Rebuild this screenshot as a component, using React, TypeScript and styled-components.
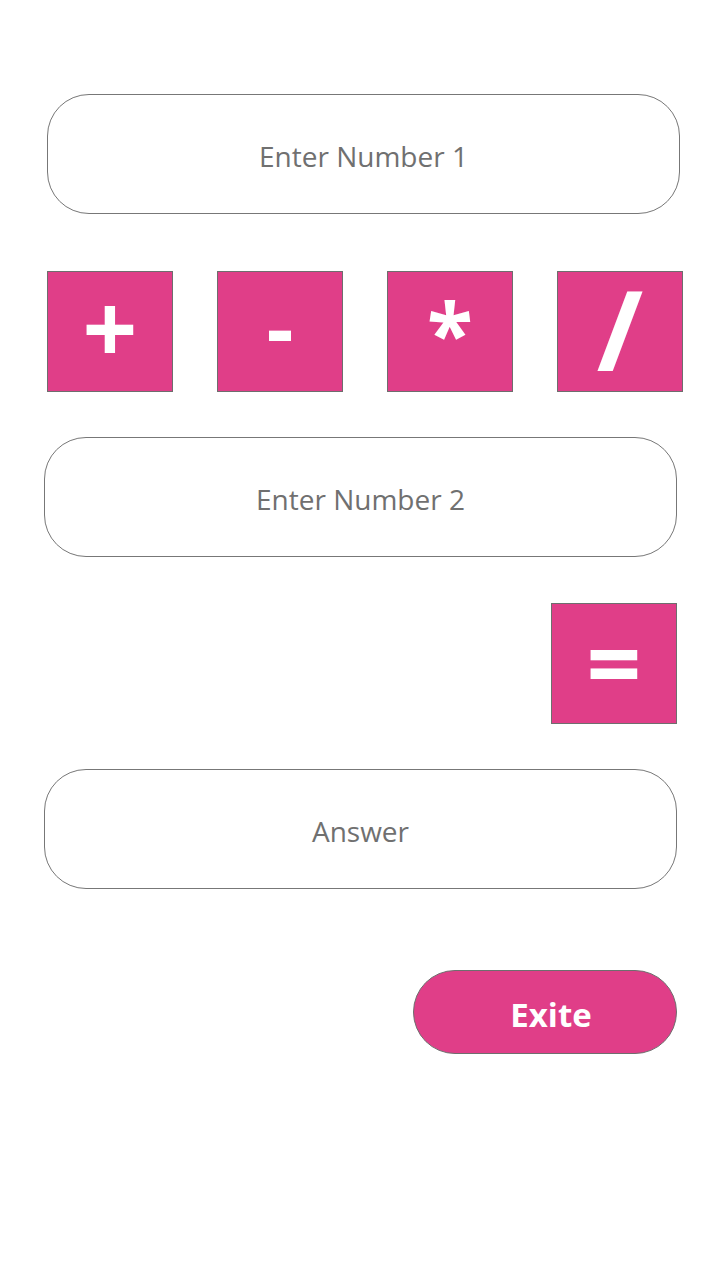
import React from "react";
import styled, { createGlobalStyle } from "styled-components";

const Global = createGlobalStyle`
  html, body { margin: 0; padding: 0; background: #ffffff; }
  body { font-family: "Open Sans", "Noto Sans", sans-serif; }
`;

const PINK = "#e03e88";

const Page = styled.div`
  width: 720px;
  height: 1280px;
  box-sizing: border-box;
  padding-top: 94px;
  display: flex;
  flex-direction: column;
`;

const Field = styled.input<{ $left: number; $gap: number }>`
  box-sizing: border-box;
  width: 633px;
  height: 120px;
  margin-left: ${(p) => p.$left}px;
  margin-bottom: ${(p) => p.$gap}px;
  border: 1px solid #777777;
  border-radius: 42px;
  background: #ffffff;
  text-align: center;
  font-family: "Open Sans", "Noto Sans", sans-serif;
  font-size: 28px;
  color: #707070;
  outline: none;
  padding: 4px 0 0 0;
  &::placeholder { color: #707070; opacity: 1; }
`;

const OpRow = styled.div`
  display: flex;
  gap: 44px;
  margin-left: 47px;
  margin-bottom: 45px;
`;

const OpButton = styled.button`
  box-sizing: border-box;
  width: 126px;
  height: 121px;
  background: ${PINK};
  border: 1px solid #6e6e6e;
  border-radius: 0;
  color: #ffffff;
  padding: 0;
  display: flex;
  align-items: center;
  justify-content: center;
  cursor: pointer;
`;

const Glyph = styled.span<{ $size: number; $lift: number }>`
  display: block;
  font-family: "Open Sans", "Noto Sans", sans-serif;
  font-weight: 700;
  font-size: ${(p) => p.$size}px;
  line-height: 1;
  margin-bottom: ${(p) => p.$lift}px;
`;

const EqualsRow = styled.div`
  display: flex;
  justify-content: flex-end;
  width: 677px;
  margin-bottom: 45px;
`;

const ExitRow = styled.div`
  display: flex;
  justify-content: flex-end;
  width: 677px;
`;

const ExitButton = styled.button`
  box-sizing: border-box;
  width: 264px;
  height: 84px;
  border-radius: 42px;
  background: ${PINK};
  border: 1px solid #6e6e6e;
  color: #ffffff;
  font-family: "Open Sans", "Noto Sans", sans-serif;
  font-weight: 700;
  font-size: 33px;
  padding: 4px 0 0 12px;
  cursor: pointer;
`;

export default function App() {
  return (
    <>
      <Global />
      <Page>
        <Field $left={47} $gap={57} placeholder="Enter Number 1" />
        <OpRow>
          <OpButton>
            <Glyph $size={96} $lift={10}>+</Glyph>
          </OpButton>
          <OpButton>
            <Glyph $size={84} $lift={10}>-</Glyph>
          </OpButton>
          <OpButton>
            <Glyph $size={84} $lift={0}>*</Glyph>
          </OpButton>
          <OpButton>
            <Glyph $size={112} $lift={8}>/</Glyph>
          </OpButton>
        </OpRow>
        <Field $left={44} $gap={46} placeholder="Enter Number 2" />
        <EqualsRow>
          <OpButton>
            <Glyph $size={96} $lift={4}>=</Glyph>
          </OpButton>
        </EqualsRow>
        <Field $left={44} $gap={81} placeholder="Answer" />
        <ExitRow>
          <ExitButton>Exite</ExitButton>
        </ExitRow>
      </Page>
    </>
  );
}
